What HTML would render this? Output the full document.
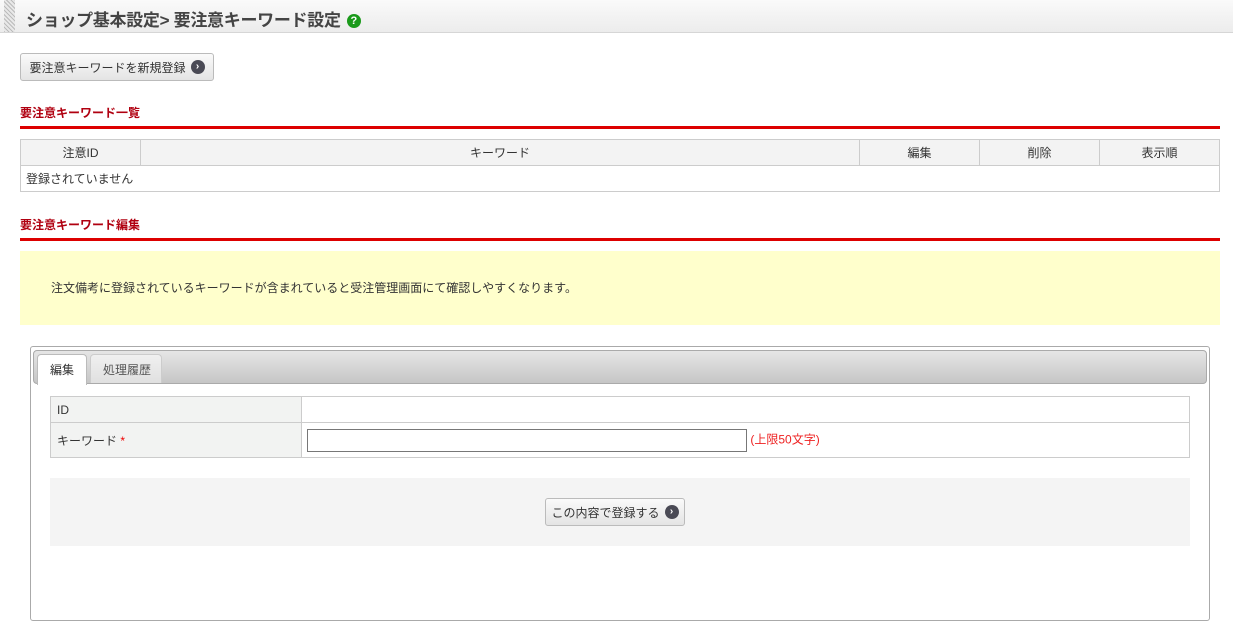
<!DOCTYPE html>
<html><head><meta charset="utf-8"><style>
*{box-sizing:border-box;margin:0;padding:0}
body{width:1233px;height:634px;background:#fff;font-family:"Liberation Sans","Noto Sans CJK JP",sans-serif;font-size:12px;color:#333;position:relative;overflow:hidden}
.abs{position:absolute}
.hdr{left:0;top:0;width:1233px;height:33px;background:linear-gradient(#fafafa,#ececec);border-bottom:1px solid #d6d6d6}
.stripe{left:4px;top:0;width:11px;height:32px;background:repeating-linear-gradient(45deg,#bbb 0 1px,#e8e8e8 1px 3px)}
.title{left:26px;top:6px;font-size:17px;font-weight:bold;color:#444;letter-spacing:-0.3px}
.q{display:inline-block;width:14px;height:14px;border-radius:50%;background:#1a9a1a;color:#fff;font-size:11px;line-height:14px;text-align:center;vertical-align:2px;margin-left:6px}
.btn{border:1px solid #bbb;border-radius:3px;background:linear-gradient(#fafafa,#e4e4e4);font-size:12px;color:#333;display:flex;align-items:center;justify-content:center}
.arr{display:inline-block;width:14px;height:14px;border-radius:50%;background:#4a4a55;color:#fff;font-size:10px;line-height:14px;text-align:center;margin-left:5px;font-weight:bold}
.sec{left:20px;font-weight:bold;color:#b00010;font-size:12px}
.red{left:20px;width:1200px;height:3px;background:#d00}
table{border-collapse:collapse}
td,th{border:1px solid #ccc;font-weight:normal}
</style></head><body>
<div class="abs hdr"></div><div class="abs stripe"></div>
<div class="abs title">ショップ基本設定&gt; 要注意キーワード設定<span class="q">?</span></div>
<div class="abs btn" style="left:20px;top:53px;width:194px;height:28px">要注意キーワードを新規登録<span class="arr">›</span></div>
<div class="abs sec" style="top:104px">要注意キーワード一覧</div>
<div class="abs red" style="top:126px"></div>
<table class="abs" style="left:20px;top:139px;width:1200px">
<tr style="height:26px;background:#f3f3f3"><th style="width:120px">注意ID</th><th>キーワード</th><th style="width:120px">編集</th><th style="width:120px">削除</th><th style="width:120px">表示順</th></tr>
<tr style="height:26px"><td colspan="5" style="padding-left:5px">登録されていません</td></tr></table>
<div class="abs sec" style="top:216px">要注意キーワード編集</div>
<div class="abs red" style="top:238px"></div>
<div class="abs" style="left:20px;top:251px;width:1200px;height:74px;background:#ffffcc;padding:28px 0 0 31px">注文備考に登録されているキーワードが含まれていると受注管理画面にて確認しやすくなります。</div>
<div class="abs" style="left:30px;top:346px;width:1180px;height:275px;border:1px solid #aaa;border-radius:3px"></div>
<div class="abs" style="left:33px;top:350px;width:1174px;height:34px;border:1px solid #aaa;border-radius:4px;background:linear-gradient(#e6e6e6,#c6c6c6)"></div>
<div class="abs" style="left:37px;top:354px;width:50px;height:31px;background:#fff;border:1px solid #bbb;border-bottom:none;border-radius:4px 4px 0 0;padding:6px 0 0 12px">編集</div>
<div class="abs" style="left:90px;top:354px;width:72px;height:29px;background:linear-gradient(#f0f0f0,#e0e0e0);border:1px solid #ccc;border-bottom:none;border-radius:4px 4px 0 0;padding:6px 0 0 12px;color:#555">処理履歴</div>
<table class="abs" style="left:50px;top:396px;width:1140px">
<tr style="height:26px"><td style="width:251px;background:#f2f3f2;padding-left:6px">ID</td><td></td></tr>
<tr style="height:35px"><td style="background:#f2f3f2;padding-left:6px">キーワード <span style="color:#e00">*</span></td><td style="padding-left:5px"><span style="display:inline-block;width:440px;height:23px;border:1px solid #777;vertical-align:middle"></span> <span style="color:#e22">(上限50文字)</span></td></tr></table>
<div class="abs" style="left:50px;top:478px;width:1140px;height:68px;background:#f4f4f4"></div>
<div class="abs btn" style="left:545px;top:498px;width:140px;height:28px">この内容で登録する<span class="arr">›</span></div>
</body></html>
